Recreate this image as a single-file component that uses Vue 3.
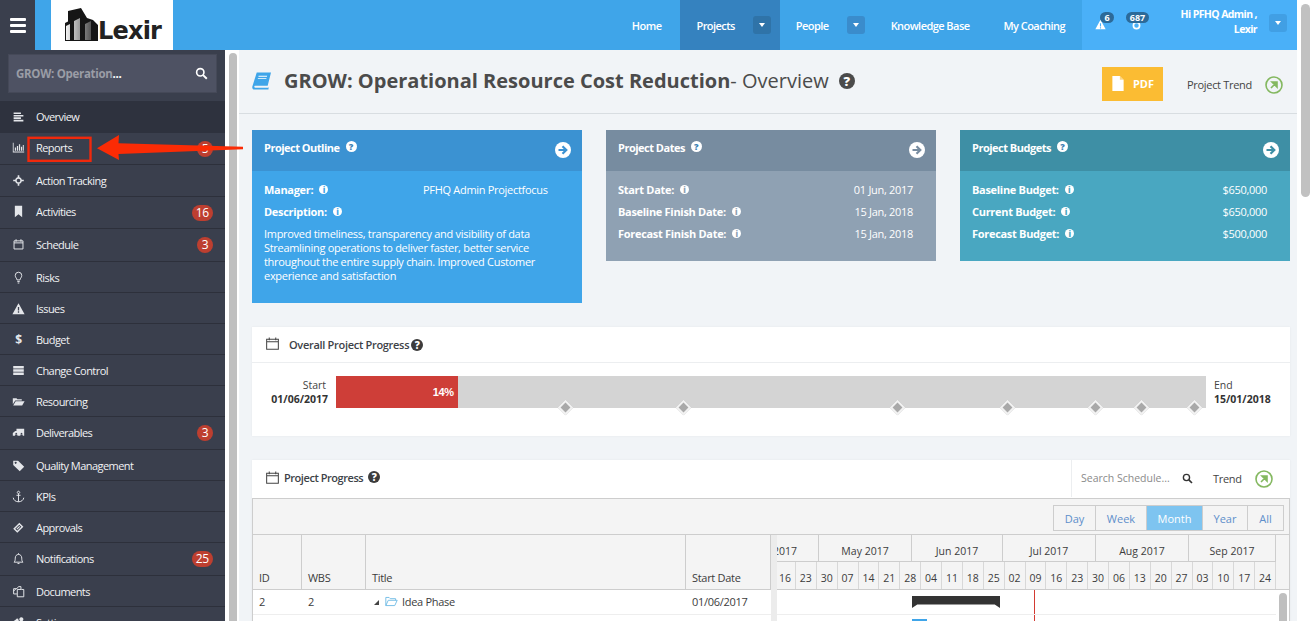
<script setup>
const menu = [
  { label: 'Overview', h: 32, active: true, d: 'M2 3h9v2H2zM2 6h12v2H2zM2 9h9v2H2zM2 12h12v2H2z' },
  { label: 'Reports', h: 32, nudge: true, badge: '5', d: 'M1 2h1v11h13v1H1zM3.500 8h1.500v4H3.500zM6 6h1.500v6H6zM8.500 4h1.500v8H8.500zM11 7h1.500v5H11zM13.300 5h1.200v7h-1.200z' },
  { label: 'Action Tracking', h: 32, line: true, bold: true, d: 'M8 4.800a3.200 3.200 0 1 0 .01 0M8 1.500v3.500M8 11v3.500M1.500 8H5M11 8h3.500' },
  { label: 'Activities', h: 32, nudge: true, badge: '16', d: 'M3.500 1h9v14L8 11.500 3.500 15z' },
  { label: 'Schedule', h: 33, badge: '3', line: true, d: 'M2.500 3.500h11v10h-11zM2.500 6h11M5 1.500v3M11 1.500v3' },
  { label: 'Risks', h: 31, line: true, d: 'M6.200 11C6 9 4 8 4 5.500a4 4 0 0 1 8 0C12 8 10 9 9.800 11zM6.500 13h3M7 14.800h2' },
  { label: 'Issues', h: 31, d: 'M8 1.500l7.500 13.500H.5zM7.200 6v4.500h1.600V6zM7.200 11.500v1.700h1.600v-1.700z' },
  { label: 'Budget', h: 31, text: '$' },
  { label: 'Change Control', h: 31, d: 'M1.500 2.500h13v3h-13zM1.500 6.500h13v3h-13zM1.500 10.500h13v3h-13z' },
  { label: 'Resourcing', h: 31, d: 'M1 4h4.500l1.200 1.300H12v1.500H4L1 11.500zM4.500 7.800H15.500L12.500 13H1.500z' },
  { label: 'Deliverables', h: 33, badge: '3', d: 'M5.500 3.500H15v8.500h-1.500a1.800 1.800 0 0 0-3.500 0H7a1.800 1.800 0 0 0-3.500 0H1V8.500l3-2.500h1.500zM5.200 11a1.200 1.200 0 1 1 .01 0M11.700 11a1.200 1.200 0 1 1 .01 0' },
  { label: 'Quality Management', h: 31, d: 'M1.500 2h6L15 9.500 9.500 15 1.500 7.500zM4.500 3.500a1.200 1.200 0 1 0 .01 0' },
  { label: 'KPIs', h: 31, line: true, d: 'M8 4.500v10M5.500 6.500h5M8 1.500a1.500 1.500 0 1 0 .01 0M1.500 9.500c.5 3 3 5 6.500 5s6-2 6.500-5' },
  { label: 'Approvals', h: 31, d: 'M9 2l5 5-7.500 7.500-5-5zM9 4.500L4 9.500l2.500 2.500 5-5zM9 6l1 1-3.500 3.500-1-1z' },
  { label: 'Notifications', h: 33, badge: '25', line: true, d: 'M2.500 12.500c1.500-1.500 1.500-3 1.500-5 0-2.500 1.500-4.500 4-4.500s4 2 4 4.500c0 2 0 3.500 1.500 5zM6.800 14.200h2.400M8 1.500V3' },
  { label: 'Documents', h: 31, line: true, d: 'M6 4.500H2V11h4M6 4.500L8 2h3v3M6.500 5.500h5l3 0V14.500H6.500zM2 7.500L5 4.500' },
  { label: 'Settings', h: 31, d: 'M6 3l1.500.5 1 2.500 2 1.500-1 2.500L7 11 4.500 12 2.500 10l.5-2L2 6l2-1zM6 6a1.500 1.500 0 1 0 .01 0M11.500 1.500a2.500 2.500 0 1 1-.01 0' },
]

const cards = [
  { cls: 'outline', title: 'Project Outline', arrow: '#3b92d2' },
  {
    cls: 'dates', title: 'Project Dates', arrow: '#778ca0',
    rows: [['Start Date:', '01 Jun, 2017'], ['Baseline Finish Date:', '15 Jan, 2018'], ['Forecast Finish Date:', '15 Jan, 2018']],
  },
  {
    cls: 'budgets', title: 'Project Budgets', arrow: '#3e8fa5',
    rows: [['Baseline Budget:', '$650,000'], ['Current Budget:', '$650,000'], ['Forecast Budget:', '$500,000']],
  },
]

const milestones = [229, 347, 561, 671, 759, 805, 858]
const scales = ['Day', 'Week', 'Month', 'Year', 'All']
const months = [
  { t: '2017', w: 44 }, { t: 'May 2017', w: 93 }, { t: 'Jun 2017', w: 91 },
  { t: 'Jul 2017', w: 93 }, { t: 'Aug 2017', w: 93 }, { t: 'Sep 2017', w: 87 },
]
const weeks = ['16','23','30','07','14','21','28','04','11','18','25','02','09','16','23','30','06','13','20','27','03','10','17','24']
</script>

<template>
  <div class="page">
    <div class="app">
      <header class="topbar">
        <button class="burger" aria-label="Menu"><i></i><i></i><i></i></button>
        <div class="logo">
          <svg class="logo-mark" viewBox="0 0 33 33">
            <defs>
              <linearGradient id="bld" x1="0" x2="1" y1="0" y2="0">
                <stop offset="0" stop-color="#f2f2f2" />
                <stop offset="1" stop-color="#555" />
              </linearGradient>
            </defs>
            <path fill="#161616" d="M0 33V15l3-1.500V3L16 0l6 10 6 2 5 5v16z" />
            <path fill="url(#bld)" d="M1 32V18l4-2v16zM9 32V13l6-3v22zM20 32V16l6-3v19z" />
          </svg>
          <span class="logo-text">Lexir</span>
        </div>
        <nav class="nav">
          <a class="nav-item home">Home</a>
          <a class="nav-item caret-item active">Projects<span class="caret"><b></b></span></a>
          <a class="nav-item caret-item">People<span class="caret"><b></b></span></a>
          <a class="nav-item">Knowledge Base</a>
          <a class="nav-item last">My Coaching</a>
        </nav>
        <div class="user">
          <div class="alert">
            <svg class="alert-ic" viewBox="0 0 16 16"><path fill="#fff" fill-rule="evenodd" d="M8 1l7.500 14H.5zM7.200 6v5h1.600V6zM7.200 12v1.700h1.600V12z" /></svg>
            <span class="pill">6</span>
          </div>
          <div class="alert second">
            <svg class="shield-ic" viewBox="0 0 16 16"><circle cx="8" cy="8" r="5.500" fill="none" stroke="#fff" stroke-width="3" /></svg>
            <span class="pill">687</span>
          </div>
          <div class="hello">Hi PFHQ Admin ,<br />Lexir</div>
          <span class="caret user-caret"><b></b></span>
        </div>
      </header>

      <div class="below">
        <aside class="sidebar">
          <div class="side-search">
            <div class="side-input">
              <span>GROW: Operation<em>...</em></span>
              <svg class="mag" viewBox="0 0 16 16"><circle cx="6.500" cy="6.500" r="4.500" fill="none" stroke="#fff" stroke-width="2" /><path d="M10 10l4.500 4.500" stroke="#fff" stroke-width="2.400" /></svg>
            </div>
          </div>
          <ul class="menu">
            <li v-for="m in menu" :key="m.label" class="menu-row" :class="{ on: m.active, tall: m.h > 31, nudge: m.nudge }" :style="{ height: m.h + 'px' }">
              <span v-if="m.text" class="menu-ic glyph">{{ m.text }}</span>
              <svg v-else class="menu-ic" viewBox="0 0 16 16">
                <path v-if="m.line" :d="m.d" fill="none" stroke="#e4e6ea" :stroke-width="m.bold ? 2 : 1.200" />
                <path v-else :d="m.d" fill="#e4e6ea" fill-rule="evenodd" />
              </svg>
              <span class="menu-label">{{ m.label }}</span>
              <span v-if="m.badge" class="menu-badge">{{ m.badge }}</span>
            </li>
          </ul>
        </aside>
        <div class="side-scroll"><div class="side-thumb"></div></div>

        <main class="main">
          <div class="head">
            <svg class="book" viewBox="0 0 20 18">
              <path fill="#3fa5e9" d="M5 0h15l-3.500 14H3.500c-1 0-1.300 1-1 1.500.2.300.6.500 1 .5h13.500l.6-.8-.3 2.800H2.500C1 18 0 16.500 .3 15z" />
              <path fill="#fff" d="M7 3.500h9l-.3 1H6.700zM6.300 6h9l-.3 1H6z" />
            </svg>
            <h1><strong>GROW: Operational Resource Cost Reduction</strong><span>- Overview</span></h1>
            <span class="help big">?</span>
            <button class="pdf">
              <svg viewBox="0 0 12 16"><path fill="#fff" d="M0 0h8l4 4v12H0z" /><path fill="#fbbc33" d="M8 0v4h4z" opacity=".6" /></svg>
              PDF
            </button>
            <a class="trend">Project Trend</a>
            <svg class="trend-ic" viewBox="0 0 18 18"><circle cx="9" cy="9" r="8" fill="none" stroke="#84b860" stroke-width="1.600" /><path d="M6 12l5.500-5.500M7 6h5v5z" fill="#84b860" stroke="#84b860" stroke-width="1.600" /></svg>
          </div>

          <section class="cards">
            <article v-for="c in cards" :key="c.title" class="card" :class="c.cls">
              <div class="card-head">
                <span class="card-title">{{ c.title }}</span>
                <span class="help white">?</span>
                <svg class="go" viewBox="0 0 16 16">
                  <circle cx="8" cy="8" r="8" fill="#fff" />
                  <path d="M3.500 8h7M7.500 4.200L11.300 8l-3.800 3.800" fill="none" :stroke="c.arrow" stroke-width="2.200" />
                </svg>
              </div>
              <div class="card-body">
                <template v-if="c.rows">
                  <div v-for="r in c.rows" :key="r[0]" class="kv">
                    <span class="k">{{ r[0] }}<span class="info">i</span></span>
                    <span class="v">{{ r[1] }}</span>
                  </div>
                </template>
                <template v-else>
                  <div class="kv">
                    <span class="k">Manager:<span class="info">i</span></span>
                    <span class="manager">PFHQ Admin Projectfocus</span>
                  </div>
                  <div class="kv">
                    <span class="k">Description:<span class="info">i</span></span>
                  </div>
                  <p class="desc">Improved timeliness, transparency and visibility of data Streamlining operations to deliver faster, better service throughout the entire supply chain. Improved Customer experience and satisfaction</p>
                </template>
              </div>
            </article>
          </section>

          <section class="panel progress">
            <div class="panel-head">
              <svg class="cal" viewBox="0 0 14 14"><path d="M.7 2.500h12.600v10.800H.7zM.7 5h12.600M3.500 .5v3M10.500 .5v3" fill="none" stroke="#444" stroke-width="1.100" /></svg>
              <span class="panel-title">Overall Project Progress</span>
              <span class="help">?</span>
            </div>
            <div class="progress-body">
              <div class="edge start"><span>Start</span><b>01/06/2017</b></div>
              <div class="track">
                <div class="fill" :style="{ width: '14%' }">14%</div>
                <i v-for="x in milestones" :key="x" class="diamond" :style="{ left: x + 'px' }"></i>
              </div>
              <div class="edge end"><span>End</span><b>15/01/2018</b></div>
            </div>
          </section>

          <section class="panel gantt">
            <div class="gantt-head">
              <svg class="cal" viewBox="0 0 14 14"><path d="M.7 2.500h12.600v10.800H.7zM.7 5h12.600M3.500 .5v3M10.500 .5v3" fill="none" stroke="#444" stroke-width="1.100" /></svg>
              <span class="panel-title pp">Project Progress</span>
              <span class="help">?</span>
              <div class="gantt-tools">
                <span class="placeholder">Search Schedule...</span>
                <svg class="mag dark" viewBox="0 0 16 16"><circle cx="6.500" cy="6.500" r="4.500" fill="none" stroke="#333" stroke-width="2" /><path d="M10 10l4.500 4.500" stroke="#333" stroke-width="2.400" /></svg>
                <span class="trend-small">Trend</span>
                <svg class="trend-ic" viewBox="0 0 18 18"><circle cx="9" cy="9" r="8" fill="none" stroke="#84b860" stroke-width="1.600" /><path d="M6 12l5.500-5.500M7 6h5v5z" fill="#84b860" stroke="#84b860" stroke-width="1.600" /></svg>
              </div>
            </div>
            <div class="grid">
              <div class="toolbar">
                <div class="scales">
                  <button v-for="s in scales" :key="s" class="scale" :class="['s-' + s, { sel: s === 'Month' }]">{{ s }}</button>
                </div>
              </div>
              <div class="columns">
                <div class="left">
                  <div class="thead">
                    <span class="c-id">ID</span>
                    <span class="c-wbs">WBS</span>
                    <span class="c-title">Title</span>
                    <span class="c-date">Start Date</span>
                  </div>
                  <div class="trow">
                    <span class="c-id">2</span>
                    <span class="c-wbs">2</span>
                    <span class="c-title">
                      <i class="tri"></i>
                      <svg class="folder" viewBox="0 0 16 13"><path d="M1 11.500V1.500h4l1.500 1.500H13V5M1 11.500L4 5h11l-3 6.500z" fill="none" stroke="#6cb9e4" stroke-width="1.100" /></svg>
                      Idea Phase
                    </span>
                    <span class="c-date">01/06/2017</span>
                  </div>
                </div>
                <div class="splitter"></div>
                <div class="right">
                  <div class="months">
                    <span v-for="m in months" :key="m.t" :style="{ width: m.w + 'px' }">{{ m.t }}</span>
                  </div>
                  <div class="weeks">
                    <span v-for="(w, i) in weeks" :key="i">{{ w }}</span>
                  </div>
                  <div class="bars">
                    <div class="today"></div>
                    <div class="summary"></div>
                    <div class="bar-line"></div>
                    <div class="task"></div>
                  </div>
                </div>
                <div class="vscroll"><div class="vhead"></div><div class="vthumb"></div></div>
              </div>
            </div>
          </section>
        </main>
      </div>

      <svg class="callout" viewBox="0 0 250 30" width="250" height="30">
        <rect x="28.500" y="2.800" width="62" height="23" fill="none" stroke="#f0290c" stroke-width="2.400" />
        <path d="M97 13.300L119 0l-.5 8.300L243 11.700v2.600L118.500 19l.5 6z" fill="#fb2b05" />
      </svg>
    </div>
    <div class="page-scroll"><div class="page-thumb"></div></div>
  </div>
</template>

<style>
html, body { margin: 0; overflow: hidden; }
</style>

<style scoped>
* { box-sizing: border-box; }
.page {
  display: flex; width: 1314px; height: 621px; overflow: hidden; background: #fff;
  font-family: "Open Sans", "Liberation Sans", sans-serif; font-size: 11px; color: #3c3c3c; letter-spacing: -.3px;
}
.app { position: relative; width: 1297px; height: 621px; display: flex; flex-direction: column; overflow: hidden; }
.page-scroll { width: 17px; padding: 4px 4px 0 4px; }
.page-thumb { width: 9px; height: 193px; border-radius: 5px; background: #c1c1c1; }

.topbar { display: flex; height: 50px; flex: none; background: #3fa5e9; color: #fff; }
.burger { width: 35px; border: 0; padding: 0; background: #3a3f4d; display: flex; flex-direction: column; align-items: center; justify-content: center; gap: 3px; }
.burger i { width: 16px; height: 3px; background: #fff; border-radius: 1px; }
.logo { margin-left: 16px; width: 122px; background: #fff; display: flex; align-items: flex-end; padding: 0 0 9px 14px; }
.logo-mark { width: 33px; height: 33px; flex: none; }
.logo-text { font-family: "DejaVu Sans", sans-serif; font-weight: 700; font-size: 24px; line-height: 19px; color: #222; margin-left: 0; letter-spacing: -.8px; }
.nav { margin-left: auto; display: flex; }
.nav-item { display: flex; align-items: center; padding: 0 17px; font-size: 11px; font-weight: 600; letter-spacing: -.55px; }
.nav-item.home { padding-right: 19px; }
.caret-item { padding: 0 9px 0 16px; }
.nav-item.active { background: #3582bf; }
.caret { width: 18px; height: 18px; margin-left: 18px; border-radius: 3px; background: #3a8ccc; display: flex; align-items: center; justify-content: center; }
.active .caret { background: #2f73a8; }
.caret b { width: 0; height: 0; border: 3.500px solid transparent; border-top: 4px solid #fff; border-bottom: 0; }
.user { width: 215px; background: #4ab0f8; display: flex; position: relative; }
.alert { position: absolute; left: 13px; top: 0; }
.alert.second { left: 44px; }
.alert-ic { position: absolute; left: 0; top: 19px; width: 11px; height: 11px; }
.shield-ic { position: absolute; left: 6px; top: 21px; width: 9px; height: 9px; }
.pill { position: absolute; top: 12px; left: 5px; height: 11px; min-width: 14px; padding: 0 3px; border-radius: 6px; background: #2c6a99; font-size: 9px; line-height: 11px; font-weight: 700; text-align: center; letter-spacing: 0; }
.second .pill { left: 0; width: 23px; }
.hello { position: absolute; right: 40px; top: 7px; text-align: right; font-size: 10.500px; font-weight: 700; line-height: 15px; white-space: nowrap; letter-spacing: -.6px; }
.user-caret { position: absolute; right: 10px; top: 14px; margin: 0; background: #419fe4; }

.below { display: flex; flex: 1; min-height: 0; }
.sidebar { width: 225px; flex: none; background: #3a3f4d; color: #fff; overflow: hidden; }
.side-search { height: 51px; padding: 5px 9px 9px; }
.side-input { height: 37px; background: #4e5263; display: flex; align-items: center; justify-content: space-between; padding: 0 8px 0 7px; color: #9a9da6; font-weight: 700; font-size: 11.500px; box-shadow: 0 0 0 1px #454958; }
.side-input em { font-style: normal; color: #fff; }
.mag { width: 13px; height: 13px; }
.menu { list-style: none; margin: 0; padding: 0; }
.menu-row { display: flex; align-items: center; border-bottom: 1px solid #2d303b; padding-left: 12px; position: relative; flex: none; }
.menu-row.tall { padding-bottom: 1px; }
.menu-row.nudge { padding-bottom: 3px; }
.menu-row.on { background: #2e323e; border-bottom-color: #2e323e; }
.menu-ic { width: 13px; height: 13px; flex: none; text-align: center; }
.glyph { font-size: 12px; font-weight: 700; color: #e4e6ea; line-height: 13px; }
.menu-label { margin-left: 11px; font-size: 11px; color: #f1f2f4; white-space: nowrap; letter-spacing: -.55px; }
.menu-badge { position: absolute; right: 12px; top: 50%; margin-top: -8px; min-width: 16px; height: 16px; padding: 0 4px; border-radius: 8px; background: #bd3f30; color: #fff; font-size: 12px; line-height: 16px; text-align: center; letter-spacing: -.2px; }
.side-scroll { width: 14px; flex: none; padding: 3px 2px 0 4px; background: #fff; }
.side-thumb { height: 100%; width: 8px; border-radius: 4px 4px 0 0; background: #bfbfbf; }

.main { flex: 1; min-width: 0; background: #f1f4f7; overflow: hidden; }
.head { height: 64px; display: flex; align-items: center; padding: 0 14px 0 13px; border-bottom: 1px solid #d8dde1; }
.book { width: 19px; height: 18px; margin-top: -1px; }
h1 { margin: 0 0 0 13px; font-size: 20px; font-weight: 400; color: #4b4b4b; white-space: nowrap; line-height: 26px; margin-top: -2px; letter-spacing: 0; }
h1 strong { font-weight: 700; }
.help { display: inline-flex; align-items: center; justify-content: center; width: 12px; height: 12px; border-radius: 50%; background: #3c3c3c; color: #fff; font-size: 10px; font-weight: 800; line-height: 1; flex: none; letter-spacing: 0; }
.help.big { width: 16px; height: 16px; font-size: 13px; margin-left: 10px; margin-top: -1px; background: #4b4b4b; }
.help.white { background: #fff; color: #3b7fb3; width: 11px; height: 11px; font-size: 9px; margin-left: 6px; margin-top: 1px; }
.pdf { margin-left: auto; width: 61px; height: 34px; border: 0; background: #fbbc33; color: #fff; font: 700 11px "Open Sans", sans-serif; display: flex; align-items: center; gap: 9px; padding: 0 0 0 10px; margin-top: 4px; }
.pdf svg { width: 12px; height: 15px; }
.trend { margin-left: 24px; font-size: 11px; color: #444; margin-top: 6px; }
.trend-ic { width: 18px; height: 18px; margin-left: 13px; flex: none; margin-top: 6px; }

.cards { display: flex; align-items: flex-start; gap: 24px; padding: 16px 7px 0 13px; }
.card { width: 330px; color: #fff; }
.card-head { height: 41px; display: flex; align-items: flex-start; padding: 10px 11px 0 12px; position: relative; font-weight: 700; }
.card-title { font-size: 11px; line-height: 15px; letter-spacing: -.5px; }
.go { width: 16px; height: 16px; margin-left: auto; margin-top: 2px; }
.card-body { padding: 7px 23px 16px 12px; }
.outline .card-head { background: #3b92d2; }
.outline .card-body { background: #3fa5e9; height: 132px; }
.dates .card-head { background: #778ca0; }
.dates .card-body { background: #8fa1b3; height: 90px; }
.budgets .card-head { background: #3e8fa5; }
.budgets .card-body { background: #49a7c1; height: 90px; }
.kv { display: flex; justify-content: space-between; height: 22px; align-items: center; font-size: 11px; }
.k { font-weight: 700; display: inline-flex; align-items: center; }
.info { display: inline-flex; justify-content: center; align-items: center; width: 9px; height: 9px; border-radius: 50%; background: #fff; color: #555; font: 800 8px "Open Sans", sans-serif; margin-left: 6px; }
.outline .info { color: #3fa5e9; }
.dates .info { color: #8fa1b3; }
.budgets .info { color: #49a7c1; }
.manager { position: absolute; margin-left: 159px; }
.desc { margin: 5px 0 0; font-size: 11px; line-height: 14px; width: 290px; }

.panel { background: #fff; box-shadow: 0 0 2px rgba(0, 0, 0, .06); margin-left: 13px; width: 1038px; }
.progress { margin-top: 24px; height: 109px; }
.panel-head { height: 36px; border-bottom: 1px solid #eceef0; display: flex; align-items: center; padding-left: 14px; }
.cal { width: 13px; height: 13px; flex: none; margin-top: -2px; }
.panel-title { margin-left: 10px; font-size: 11px; font-weight: 600; color: #3d4247; margin-right: 2px; }
.progress-body { display: flex; padding-top: 13px; position: relative; }
.edge { display: flex; flex-direction: column; font-size: 10.500px; line-height: 14px; padding-top: 2px; color: #444; letter-spacing: 0; }
.edge b { font-weight: 700; color: #333; }
.edge.start { width: 84px; padding-right: 8px; text-align: right; }
.edge.start span { padding-right: 2px; }
.edge.end { padding-left: 8px; }
.track { width: 870px; height: 32px; background: #d4d4d4; position: relative; }
.fill { height: 100%; background: #ce3e38; color: #fff; font: 700 11px/32px "Liberation Sans", sans-serif; text-align: right; padding-right: 4px; }
.diamond { position: absolute; top: 26px; width: 11px; height: 11px; margin-left: -5.500px; background: #a9a9a9; border: 2px solid #f2f2f2; transform: rotate(45deg); }

.gantt { margin-top: 24px; height: 300px; }
.gantt-head { height: 38px; display: flex; align-items: center; padding: 0 0 4px 14px; }
.gantt-head > .cal { margin-top: 0; }
.pp { margin-left: 5px; margin-right: 5px; letter-spacing: -.45px; }
.gantt-tools { margin-left: auto; width: 219px; height: 37px; margin-top: 1px; margin-bottom: -1px; border-left: 1px solid #eceef0; display: flex; align-items: center; padding-left: 9px; }
.placeholder { color: #8a8a8a; font-size: 10.500px; white-space: nowrap; width: 99px; letter-spacing: 0; }
.mag.dark { width: 11px; height: 11px; margin-left: 2px; }
.trend-small { margin-left: 20px; font-size: 11px; color: #444; }
.gantt-tools .trend-ic { margin: 2px 0 0 13px; }
.grid { border: 1px solid #cdcdcd; margin-left: 0; height: 200px; overflow: hidden; }
.toolbar { height: 36px; background: #f4f4f4; border-bottom: 1px solid #cdcdcd; display: flex; justify-content: flex-end; padding: 6px 5px 0 0; }
.scales { display: flex; height: 26px; border: 1px solid #cdcdcd; }
.scale { border: 0; border-left: 1px solid #cdcdcd; background: #f4f4f4; padding: 0; font: 400 11px "Open Sans", sans-serif; color: #5e8fcb; }
.scale:first-child { border-left: 0; }
.s-Day { width: 41px; } .s-Week { width: 51px; } .s-Month { width: 56px; } .s-Year { width: 45px; } .s-All { width: 36px; }
.scale.sel { background: #7ec4f0; color: #fff; }
.columns { display: flex; height: 165px; }
.left { width: 518px; flex: none; }
.thead { height: 55px; background: #f4f4f4; border-bottom: 1px solid #cdcdcd; display: flex; }
.thead span { border-right: 1px solid #cdcdcd; padding-top: 35px; }
.trow { display: flex; height: 25px; border-bottom: 1px solid #eee; align-items: center; padding-bottom: 2px; }
.c-id { width: 49px; padding-left: 6px; flex: none; }
.c-wbs { width: 64px; padding-left: 6px; flex: none; }
.c-title { width: 320px; padding-left: 6px; flex: none; display: flex; align-items: center; }
.thead .c-title { align-items: flex-start; }
.c-date { width: 81px; padding-left: 6px; flex: none; }
.thead .c-date { width: 85px; }
.tri { width: 0; height: 0; border-left: 5px solid transparent; border-bottom: 5px solid #444; margin: 2px 6px 0 2px; }
.folder { width: 13px; height: 11px; margin-right: 4px; }
.splitter { width: 6px; background: #ececec; flex: none; position: relative; z-index: 1; }
.right { width: 501px; flex: none; margin-left: -2px; overflow: hidden; }
.months { height: 27px; background: #f4f4f4; border-bottom: 1px solid #cdcdcd; display: flex; }
.months span { text-align: center; line-height: 32px; border-right: 1px solid #cdcdcd; flex: none; overflow: hidden; white-space: nowrap; font-size: 10.500px; letter-spacing: 0; }
.months span:first-child { text-align: left; text-indent: -2px; }
.weeks { height: 28px; background: #f4f4f4; border-bottom: 1px solid #cdcdcd; display: grid; grid-template-columns: repeat(24, 1fr); }
.weeks span { text-align: center; line-height: 32px; border-right: 1px solid #d8d8d8; font-size: 10.500px; letter-spacing: 0; overflow: hidden; }
.bars { position: relative; height: 110px; }
.today { position: absolute; left: 259px; top: 0; bottom: 0; width: 1px; background: #d33a32; }
.summary { position: absolute; left: 137px; top: 6px; width: 88px; height: 12px; background: #333; clip-path: polygon(0 0, 100% 0, 100% 100%, 94% 70%, 6% 70%, 0 100%); }
.bar-line { position: absolute; left: 0; right: 0; top: 24px; height: 1px; background: #eee; }
.task { position: absolute; left: 137px; top: 29px; width: 15px; height: 14px; background: #3fa5e9; }
.vscroll { flex: 1; background: #fff; }
.vhead { height: 55px; background: #f4f4f4; border-bottom: 1px solid #cdcdcd; }
.vthumb { width: 8px; height: 40px; border-radius: 4px; background: #bfbfbf; margin: 3px 0 0 3px; }

.callout { position: absolute; left: 0; top: 135px; pointer-events: none; }
</style>
